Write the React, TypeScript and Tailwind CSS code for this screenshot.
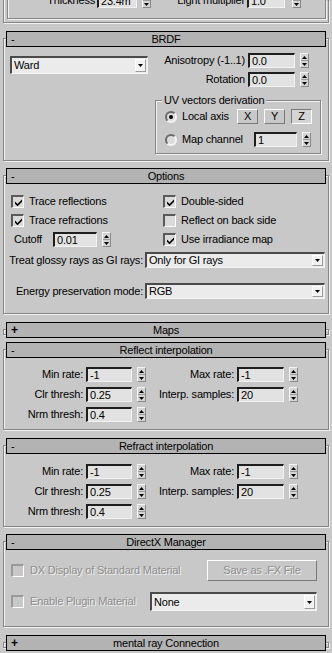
import React from "react";

const ETCH = "border border-[#858585] shadow-[inset_1px_1px_0_#f2f2f2,1px_1px_0_#f2f2f2]";

function UpTri() {
  return (
    <svg width="5" height="3" viewBox="0 0 5 3">
      <path d="M2.5 0L5 3H0Z" fill="#000" />
    </svg>
  );
}
function DownTri() {
  return (
    <svg width="5" height="3" viewBox="0 0 5 3">
      <path d="M0 0H5L2.5 3Z" fill="#000" />
    </svg>
  );
}

function Spinner({ className = "" }: { className?: string }) {
  return (
    <div className={`flex h-[15px] w-[9px] shrink-0 flex-col border border-t-[#f4f4f4] border-l-[#f4f4f4] border-r-[#8a8a8a] border-b-[#8a8a8a] bg-[#d4d4d4] ${className}`}>
      <div className="flex flex-1 items-center justify-center">
        <UpTri />
      </div>
      <div className="h-px bg-[#9a9a9a]" />
      <div className="flex flex-1 items-center justify-center">
        <DownTri />
      </div>
    </div>
  );
}

function Field({ value, className = "" }: { value: string; className?: string }) {
  return (
    <div className={`flex h-[15px] shrink-0 items-center border-t-2 border-l-2 border-r border-b border-t-[#1e1e1e] border-l-[#1e1e1e] border-r-[#f2f2f2] border-b-[#f2f2f2] bg-[#e2e2e2] pl-[2px] text-[11px] leading-[12px] text-black ${className}`}>
      {value}
    </div>
  );
}

function Dropdown({ value, className = "" }: { value: string; className?: string }) {
  return (
    <div className={`flex shrink-0 border-t-2 border-l-2 border-r border-b border-t-[#4a4a4a] border-l-[#4a4a4a] border-r-[#f4f4f4] border-b-[#f4f4f4] bg-[#ebebeb] ${className}`}>
      <div className="flex flex-1 items-center pl-[2px] text-[11px] text-black">{value}</div>
      <div className="my-[1px] mr-[1px] flex w-[11px] items-center justify-center border border-t-white border-l-white border-r-[#9c9c9c] border-b-[#9c9c9c] bg-[#f2f2f2]">
        <DownTri />
      </div>
    </div>
  );
}

function Check({ checked = false, disabled = false }: { checked?: boolean; disabled?: boolean }) {
  return (
    <div className={`flex h-[13px] w-[13px] shrink-0 items-center justify-center border-t-2 border-l-2 border-r border-b border-r-white border-b-white ${disabled ? "border-t-[#9a9a9a] border-l-[#9a9a9a] bg-[#c8c8c8]" : "border-t-[#5a5a5a] border-l-[#5a5a5a] bg-[#dadada]"}`}>
      {checked && (
        <svg width="7" height="7" viewBox="0 0 7 7">
          <path d="M0 2.5L2.5 5L7 0.5V2.8L2.5 7.3L0 4.8Z" fill="#000" />
        </svg>
      )}
    </div>
  );
}

function Radio({ on = false }: { on?: boolean }) {
  return (
    <div className="flex h-[12px] w-[12px] shrink-0 items-center justify-center rounded-full border-2 border-t-[#6a6a6a] border-l-[#6a6a6a] border-r-[#f4f4f4] border-b-[#f4f4f4] bg-[#dcdcdc]">
      {on && <div className="h-[4px] w-[4px] rounded-full bg-black" />}
    </div>
  );
}

function Btn({ label, pressed = false }: { label: string; pressed?: boolean }) {
  return (
    <div className={`flex h-[15px] w-[21px] items-center justify-center border text-[11px] text-black ${pressed ? "border-t-[#7a7a7a] border-l-[#7a7a7a] border-r-white border-b-white bg-[#d4d4d4]" : "border-t-white border-l-white border-r-[#7a7a7a] border-b-[#7a7a7a] bg-[#c8c8c8]"}`}>
      {label}
    </div>
  );
}

function Rollout({
  title,
  open = true,
  mt,
  children,
}: {
  title: string;
  open?: boolean;
  mt: string;
  children?: React.ReactNode;
}) {
  return (
    <div className={`mx-[3px] ${ETCH} ${mt}`}>
      <div className={`mx-[2px] -mt-[8px] grid h-[16px] grid-cols-[22px_1fr_22px] items-center border border-black bg-[#b3b3b3] text-[11px] text-black ${open ? "" : "-mb-[4px]"}`}>
        <span className={`pl-[4px] leading-none ${open ? "" : "font-bold text-[12px]"}`}>{open ? "-" : "+"}</span>
        <span className="text-center leading-none">{title}</span>
        <span />
      </div>
      {open && children}
    </div>
  );
}

function NumRow({
  l1,
  v1,
  l2,
  v2,
}: {
  l1: string;
  v1: string;
  l2?: string;
  v2?: string;
}) {
  return (
    <div className="flex h-[15px] items-center">
      <div className="w-[79px] text-right text-[11px]">{l1}</div>
      <Field value={v1} className="ml-[3px] w-[46px]" />
      <Spinner className="ml-[5px]" />
      {l2 && (
        <>
          <div className="w-[88px] text-right text-[11px]">{l2}</div>
          <Field value={v2 || ""} className="ml-[3px] w-[47px]" />
          <Spinner className="ml-[5px]" />
        </>
      )}
    </div>
  );
}

export default function App() {
  return (
    <div className="h-[653px] w-[332px] overflow-hidden whitespace-nowrap bg-[#c8c8c8] font-['Liberation_Sans',Arial,sans-serif] text-[11px] tracking-[-0.2px] text-black">
      {/* partial rollout at top */}
      <div className="mx-[3px] border-x border-b border-[#858585] pb-[3px] shadow-[1px_1px_0_#f2f2f2,inset_1px_0_0_#f2f2f2]">
        <div className="ml-[3px] mr-[2px] flex h-[19px] items-end border-x border-b border-[#858585] pb-[10px] shadow-[1px_1px_0_#f2f2f2,inset_1px_0_0_#f2f2f2]">
          <div className="flex h-[15px] items-center">
            <div className="w-[87px] text-right">Thickness</div>
            <Field value="23.4m" className="ml-[2px] w-[40px]" />
            <Spinner className="ml-[5px]" />
            <div className="w-[94px] text-right">Light multiplier</div>
            <Field value="1.0" className="ml-[2px] w-[38px]" />
            <Spinner className="ml-[7px]" />
          </div>
        </div>
      </div>

      {/* BRDF */}
      <Rollout title="BRDF" mt="mt-[15px]">
        <div className="flex">
          <div className="ml-[6px] mt-[9px]">
            <Dropdown value="Ward" className="h-[18px] w-[138px]" />
          </div>
          <div className="ml-auto mr-[7px] mt-[6px] mb-[6px] flex flex-col items-end">
            <div className="mr-[12px] flex h-[15px] items-center">
              <span>Anisotropy (-1..1)</span>
              <Field value="0.0" className="ml-[3px] w-[47px]" />
              <Spinner className="ml-[5px]" />
            </div>
            <div className="mr-[12px] mt-[4px] flex h-[15px] items-center">
              <span>Rotation</span>
              <Field value="0.0" className="ml-[3px] w-[47px]" />
              <Spinner className="ml-[5px]" />
            </div>
            <div className={`mt-[13px] h-[54px] w-[166px] ${ETCH}`}>
              <div className="-mt-[8px] ml-[6px] h-[14px] w-fit bg-[#c8c8c8] px-[2px] leading-[14px]">
                UV vectors derivation
              </div>
              <div className="ml-[9px] mt-[2px] flex h-[15px] items-center">
                <Radio on />
                <span className="ml-[5px] w-[55px]">Local axis</span>
                <div className="flex gap-[6px]">
                  <Btn label="X" />
                  <Btn label="Y" />
                  <Btn label="Z" pressed />
                </div>
              </div>
              <div className="ml-[9px] mt-[8px] flex h-[15px] items-center">
                <Radio />
                <span className="ml-[5px] w-[72px]">Map channel</span>
                <Field value="1" className="w-[43px]" />
                <Spinner className="ml-[5px]" />
              </div>
            </div>
          </div>
        </div>
      </Rollout>

      {/* Options */}
      <Rollout title="Options" mt="mt-[14px]">
        <div className="flex flex-col pt-[10px] pb-[14px]">
          <div className="flex h-[15px] items-center">
            <div className="flex w-[159px] items-center pl-[7px]">
              <Check checked />
              <span className="ml-[5px]">Trace reflections</span>
            </div>
            <Check checked />
            <span className="ml-[5px]">Double-sided</span>
          </div>
          <div className="mt-[4px] flex h-[15px] items-center">
            <div className="flex w-[159px] items-center pl-[7px]">
              <Check checked />
              <span className="ml-[5px]">Trace refractions</span>
            </div>
            <Check />
            <span className="ml-[5px]">Reflect on back side</span>
          </div>
          <div className="mt-[4px] flex h-[15px] items-center">
            <div className="flex w-[159px] items-center pl-[10px]">
              <span className="w-[39px]">Cutoff</span>
              <Field value="0.01" className="w-[44px]" />
              <Spinner className="ml-[5px]" />
            </div>
            <Check checked />
            <span className="ml-[5px]">Use irradiance map</span>
          </div>
          <div className="mt-[5px] flex h-[16px] items-center">
            <span className="w-[139px] text-right">Treat glossy rays as GI rays:</span>
            <Dropdown value="Only for GI rays" className="ml-[2px] h-[16px] w-[180px]" />
          </div>
          <div className="mt-[15px] flex h-[16px] items-center">
            <span className="w-[139px] text-right">Energy preservation mode:</span>
            <Dropdown value="RGB" className="ml-[2px] h-[16px] w-[180px]" />
          </div>
        </div>
      </Rollout>

      <Rollout title="Maps" open={false} mt="mt-[15px]" />

      <Rollout title="Reflect interpolation" mt="mt-[14px]">
        <div className="flex flex-col gap-[5px] pt-[9px] pb-[7px]">
          <NumRow l1="Min rate:" v1="-1" l2="Max rate:" v2="-1" />
          <NumRow l1="Clr thresh:" v1="0.25" l2="Interp. samples:" v2="20" />
          <NumRow l1="Nrm thresh:" v1="0.4" />
        </div>
      </Rollout>

      <Rollout title="Refract interpolation" mt="mt-[15px]">
        <div className="flex flex-col gap-[5px] pt-[10px] pb-[7px]">
          <NumRow l1="Min rate:" v1="-1" l2="Max rate:" v2="-1" />
          <NumRow l1="Clr thresh:" v1="0.25" l2="Interp. samples:" v2="20" />
          <NumRow l1="Nrm thresh:" v1="0.4" />
        </div>
      </Rollout>

      <Rollout title="DirectX Manager" mt="mt-[14px]">
        <div className="flex flex-col pt-[10px] pb-[15px]">
          <div className="flex h-[21px] items-center">
            <div className="ml-[7px]">
              <Check disabled />
            </div>
            <span className="ml-[6px] text-[#8e8e8e] [text-shadow:1px_1px_0_#f0f0f0]">
              DX Display of Standard Material
            </span>
            <div className="ml-auto mr-[11px] flex h-[21px] w-[110px] items-center justify-center border border-t-white border-l-white border-r-[#7a7a7a] border-b-[#7a7a7a] text-[#8e8e8e] [text-shadow:1px_1px_0_#f0f0f0]">
              Save as .FX File
            </div>
          </div>
          <div className="mt-[11px] flex h-[19px] items-center">
            <div className="ml-[7px]">
              <Check disabled />
            </div>
            <span className="ml-[6px] text-[#8e8e8e] [text-shadow:1px_1px_0_#f0f0f0]">
              Enable Plugin Material
            </span>
            <Dropdown value="None" className="ml-auto mr-[11px] h-[19px] w-[167px]" />
          </div>
        </div>
      </Rollout>

      <Rollout title="mental ray Connection" open={false} mt="mt-[15px]" />
    </div>
  );
}
